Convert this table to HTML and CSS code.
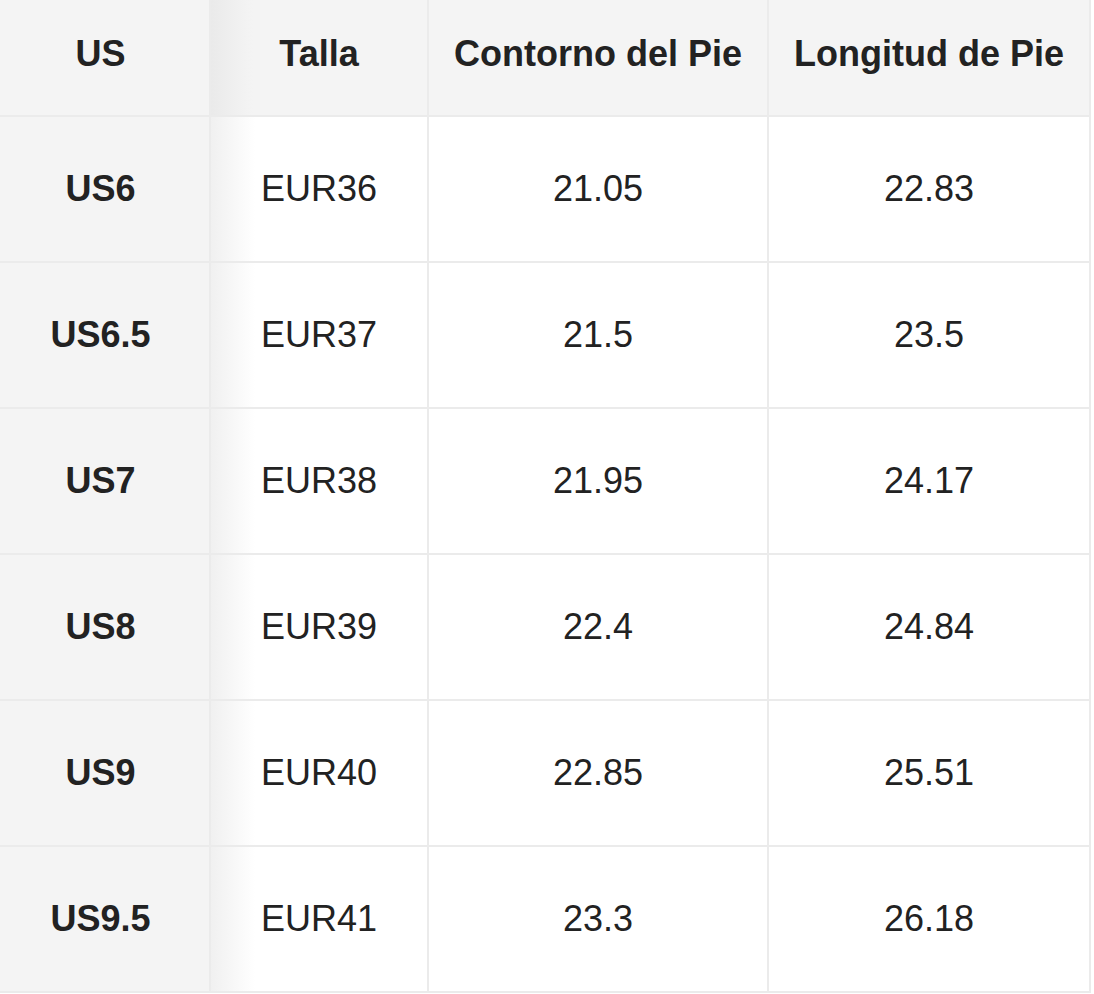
FILE: index.html
```html
<!DOCTYPE html>
<html lang="es">
<head>
<meta charset="utf-8">
<title>Guía de tallas</title>
<link rel="stylesheet" href="styles.css">
</head>
<body>
<table class="size-table">
  <colgroup>
    <col class="c1"><col class="c2"><col class="c3"><col class="c4">
  </colgroup>
  <thead>
    <tr>
      <th class="first">US</th>
      <th class="second">Talla</th>
      <th>Contorno del Pie</th>
      <th>Longitud de Pie</th>
    </tr>
  </thead>
  <tbody>
    <tr><th class="first">US6</th><td class="second">EUR36</td><td>21.05</td><td>22.83</td></tr>
    <tr><th class="first">US6.5</th><td class="second">EUR37</td><td>21.5</td><td>23.5</td></tr>
    <tr><th class="first">US7</th><td class="second">EUR38</td><td>21.95</td><td>24.17</td></tr>
    <tr><th class="first">US8</th><td class="second">EUR39</td><td>22.4</td><td>24.84</td></tr>
    <tr><th class="first">US9</th><td class="second">EUR40</td><td>22.85</td><td>25.51</td></tr>
    <tr><th class="first">US9.5</th><td class="second">EUR41</td><td>23.3</td><td>26.18</td></tr>
  </tbody>
</table>
</body>
</html>
```

FILE: styles.css
```css
html, body {
  margin: 0;
  padding: 0;
  background: #ffffff;
}

body {
  font-family: "Liberation Sans", Arial, sans-serif;
  color: #222222;
}

.size-table {
  table-layout: fixed;
  border-collapse: separate;
  border-spacing: 0;
  width: 1091px;
}

.size-table col.c1 { width: 211px; }
.size-table col.c2 { width: 218px; }
.size-table col.c3 { width: 340px; }
.size-table col.c4 { width: 322px; }

.size-table th,
.size-table td {
  box-sizing: border-box;
  padding: 0;
  text-align: center;
  vertical-align: middle;
  font-size: 36px;
  line-height: 40px;
  border-right: 2px solid #ebebeb;
  border-bottom: 2px solid #ebebeb;
}

.size-table th {
  font-weight: 700;
}

.size-table td {
  font-weight: 400;
  background: #ffffff;
}

.size-table thead th {
  height: 117px;
  background: #f4f4f4;
  padding-bottom: 7px;
}

.size-table tbody tr {
  height: 146px;
}

.size-table .first {
  background: #f4f4f4;
  padding-right: 8px;
}

.size-table thead .second {
  background: linear-gradient(to right, #eaeaea 0, rgba(244, 244, 244, 0) 42px), #f4f4f4;
}

.size-table tbody .second {
  background: linear-gradient(to right, #f0f0f0 0, rgba(255, 255, 255, 0) 44px), #ffffff;
}
```
